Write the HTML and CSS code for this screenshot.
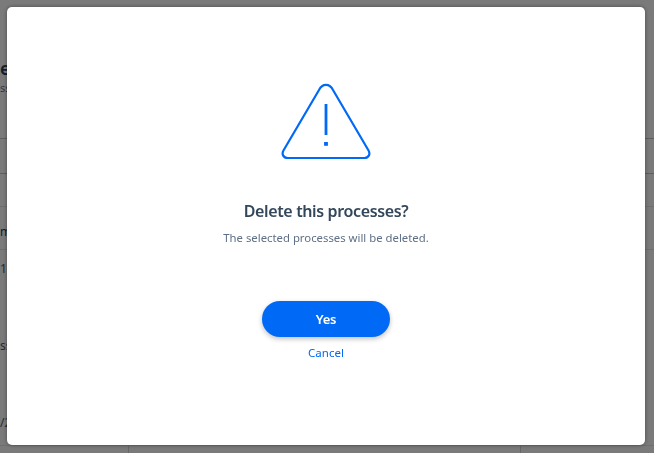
FILE: index.html
```html
<!DOCTYPE html>
<html lang="en">
	<head>
		<meta charset="UTF-8">
		<title>Processes</title>
		<link rel="stylesheet" href="styles.css">
	</head>
	<body>
		<div class="page">
			<div class="page-head">
				<h1 class="page-title">e</h1>
				<p class="page-sub">ss</p>
			</div>
			<div class="toolbar"></div>
			<div class="filters"></div>
			<div class="table-head">m</div>
			<div class="table-row">
				<p>1</p>
				<p class="row-name">ss</p>
				<p class="row-date">/2</p>
			</div>
			<div class="table-foot">
				<div class="cell-first"></div>
				<div class="cell-mid"></div>
				<div class="cell-last"></div>
			</div>
		</div>

		<div class="mask">
			<div class="dialog">
				<svg class="warn-icon" width="90" height="77" viewBox="0 0 90 77" fill="none" stroke="#0069f5" stroke-linejoin="round" stroke-linecap="butt">
					<path stroke-width="2.2" d="M38 7 2.6 67.2C.2 71.3 2.6 75 6.6 75H83.4C87.4 75 89.8 71.3 87.4 67.2L52 7C48.8 .1 41.2 .1 38 7Z"/>
					<path stroke-width="2.8" d="M45 21V52"/>
					<path stroke-width="3.8" d="M45 59V62.8"/>
				</svg>
				<h2 class="dialog-title">Delete this processes?</h2>
				<p class="dialog-text">The selected processes will be deleted.</p>
				<button class="btn-yes">Yes</button>
				<a class="btn-cancel" href="#">Cancel</a>
			</div>
		</div>
	</body>
</html>
```

FILE: styles.css
```css
*{
	margin: 0;
	padding: 0;
	box-sizing: border-box;
}
html, body{
	height: 100%;
	overflow: hidden;
}
body{
	font-family: "Noto Sans", "Open Sans", sans-serif;
	background-color: #fff;
}

/* page behind the dialog, only the left edge shows */
.page{
	height: 100%;
	display: flex;
	flex-direction: column;
	color: #27405a;
}
.page-head{
	height: 139px;
	padding-top: 58px;
	border-bottom: 1px solid #c4c4c4;
}
.page-title{
	font-size: 18px;
	line-height: 20px;
	font-weight: 600;
}
.page-sub{
	margin-top: 3px;
	font-size: 11px;
	line-height: 14px;
	color: #6b7a90;
}
.toolbar{
	height: 35px;
	border-bottom: 1px solid #c4c4c4;
}
.filters{
	height: 33px;
	border-bottom: 1px solid #e6e6e6;
}
.table-head{
	height: 43px;
	padding-top: 16px;
	font-size: 12px;
	border-bottom: 1px solid #e6e6e6;
}
.table-row{
	height: 195px;
	padding-top: 10px;
	font-size: 12px;
	color: #4b5a6e;
}
.row-name{
	margin-top: 60px;
}
.row-date{
	margin-top: 60px;
}
.table-foot{
	display: flex;
	flex: 1;
	border-top: 1px solid #e6e6e6;
}
.cell-first{
	width: 129px;
	border-right: 1px solid #d8d8d8;
}
.cell-mid{
	width: 392px;
	border-right: 1px solid #d8d8d8;
}

.mask{
	position: fixed;
	top: 0;
	left: 0;
	width: 100%;
	height: 100%;
	padding: 7px 9px 8px 7px;
	background-color: rgba(0,0,0,.52);
}
.dialog{
	display: flex;
	flex-direction: column;
	align-items: center;
	height: 100%;
	padding-top: 76px;
	background-color: #fff;
	border-radius: 5px;
	box-shadow: 0 0 4px rgba(0,0,0,.4);
}
.warn-icon{
	display: block;
}
.dialog-title{
	margin-top: 40px;
	font-size: 16px;
	line-height: 22px;
	font-weight: 600;
	letter-spacing: -.36px;
	color: #33475b;
}
.dialog-text{
	margin-top: 7px;
	font-size: 11.33px;
	line-height: 18px;
	color: #5f6f86;
}
.btn-yes{
	width: 128px;
	height: 36px;
	margin-top: 54px;
	font-family: inherit;
	font-size: 13px;
	line-height: 36px;
	font-weight: 600;
	letter-spacing: -.2px;
	color: #fff;
	background-color: #0069f5;
	border: 0;
	border-radius: 18px;
	box-shadow: 0 2px 5px rgba(0,0,0,.25);
}
.btn-cancel{
	margin-top: 7px;
	font-size: 11.5px;
	line-height: 18px;
	color: #0069f5;
	text-decoration: none;
}
```
